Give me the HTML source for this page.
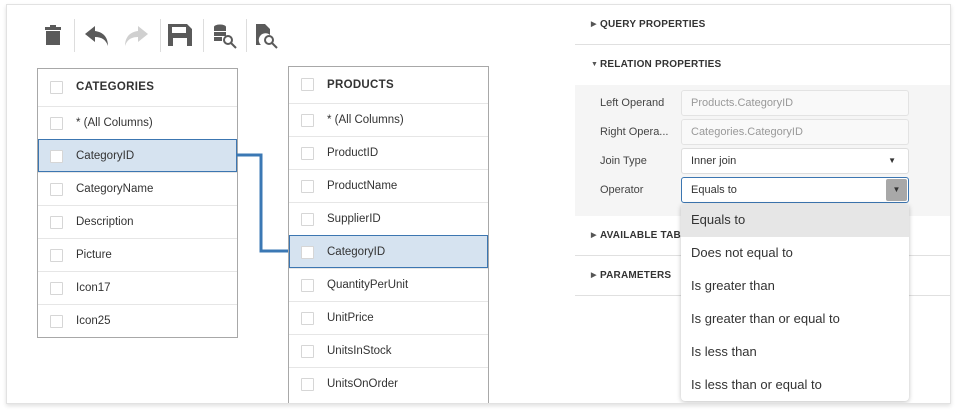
<!DOCTYPE html>
<html><head><style>
*{box-sizing:border-box;margin:0;padding:0}
body{width:971px;height:412px;background:#fff;position:relative;overflow:hidden;font-family:"Liberation Sans",Arial,sans-serif;color:#333}
.frame{position:absolute;left:6px;top:4px;width:945px;height:400px;border:1px solid #e2e2e2;box-shadow:0 2px 4px rgba(0,0,0,.12);overflow:hidden;background:#fff}
.a{position:absolute}
.sep{position:absolute;top:19px;width:1px;height:33px;background:#ddd}
.tbl{position:absolute;width:201px;border:1px solid #a8a8a8;background:#fff;overflow:hidden}
.row{height:33px;border-top:1px solid #e6e6e6;position:relative;font-size:11.5px;line-height:32px;padding-left:38px}
.row:first-child{border-top:none}
.row .cb{position:absolute;left:12px;top:10px;width:13px;height:13px;border:1px solid #d6d6d6;background:#fff;border-radius:1px}
.hdr{font-weight:bold;font-size:11.5px;letter-spacing:.3px}
.sel{background:#d6e3f0;outline:1px solid #3c76b1;outline-offset:-1px}
.sec{position:absolute;left:568px;width:376px;border-bottom:1px solid #e0e0e0;font-size:10px;font-weight:bold;letter-spacing:.2px;padding-left:25px}
.sec i{position:absolute;left:16px;font-style:normal;font-size:7px;color:#555}
.lbl{position:absolute;left:593px;font-size:11px;color:#444}
.inp{position:absolute;left:674px;width:228px;height:26px;border:1px solid #e3e3e3;border-radius:3px;font-size:11px;line-height:24px;padding-left:9px;background:#f9f9f9;color:#999}
.dd{position:absolute;left:674px;top:199px;width:228px;height:197px;background:#fff;border-radius:4px;box-shadow:0 1px 5px rgba(0,0,0,.25)}
.dd div{height:33px;line-height:32px;padding-left:10px;font-size:13px;color:#333}
</style></head><body>
<div class="frame">
<svg class="a" style="left:36px;top:18px" width="250" height="32" viewBox="36 18 250 32">
 <g fill="#5a5a5a">
  <rect x="38" y="22" width="16" height="3"/><rect x="43" y="20" width="6" height="3"/>
  <rect x="39" y="26" width="14" height="14"/>
  <path d="M88 21 L78 29 L88 37 L88 32 C95 32 99 35 101 41 C101 32 96 27 88 26 Z"/>
 </g>
 <path fill="#d0d0d0" d="M131 21 L141 29 L131 37 L131 32 C124 32 120 35 118 41 C118 32 123 27 131 26 Z"/>
 <g fill="#5a5a5a">
  <path d="M161 19 H180 L185 24 V41 H161 Z M165 22 V28 H179 V22 Z M166 33 V41 H180 V33 Z" fill-rule="evenodd"/>
  <ellipse cx="213" cy="22" rx="6" ry="2.5"/><rect x="207" y="22" width="12" height="4"/>
  <rect x="207" y="27" width="12" height="4"/><rect x="207" y="32" width="8" height="4"/>
  <path d="M249 19 H258 L263 24 V30 A6 6 0 0 0 254 40 H249 Z"/>
 </g>
 <g fill="none" stroke="#5a5a5a" stroke-width="2">
  <circle cx="221" cy="35" r="4"/><path d="M224 38 L229 43"/>
  <circle cx="262" cy="35" r="4"/><path d="M265 38 L270 43"/>
 </g>
</svg>
<div class="sep" style="left:67px;top:14px"></div>
<div class="sep" style="left:153px;top:14px"></div>
<div class="sep" style="left:196px;top:14px"></div>
<div class="sep" style="left:239px;top:14px"></div>

<div class="tbl" style="left:30px;top:63px">
 <div class="row hdr" style="height:37px;line-height:37px"><span class="cb" style="top:12px"></span>CATEGORIES</div>
 <div class="row"><span class="cb"></span>* (All Columns)</div>
 <div class="row sel"><span class="cb"></span>CategoryID</div>
 <div class="row"><span class="cb"></span>CategoryName</div>
 <div class="row"><span class="cb"></span>Description</div>
 <div class="row"><span class="cb"></span>Picture</div>
 <div class="row"><span class="cb"></span>Icon17</div>
 <div class="row"><span class="cb"></span>Icon25</div>
</div>
<div class="tbl" style="left:281px;top:61px;height:345px">
 <div class="row hdr" style="height:36px;line-height:36px"><span class="cb" style="top:11px"></span>PRODUCTS</div>
 <div class="row"><span class="cb"></span>* (All Columns)</div>
 <div class="row"><span class="cb"></span>ProductID</div>
 <div class="row"><span class="cb"></span>ProductName</div>
 <div class="row"><span class="cb"></span>SupplierID</div>
 <div class="row sel"><span class="cb"></span>CategoryID</div>
 <div class="row"><span class="cb"></span>QuantityPerUnit</div>
 <div class="row"><span class="cb"></span>UnitPrice</div>
 <div class="row"><span class="cb"></span>UnitsInStock</div>
 <div class="row"><span class="cb"></span>UnitsOnOrder</div>
</div>
<svg class="a" style="left:0;top:0" width="300" height="300"><path d="M229 150 H254 V246 H281" fill="none" stroke="#3b78b4" stroke-width="3"/></svg>

<div class="sec" style="top:0;height:40px;line-height:40px"><i>&#9654;</i>QUERY PROPERTIES</div>
<div class="sec" style="top:40px;height:40px;line-height:40px;border:none"><i>&#9660;</i>RELATION PROPERTIES</div>
<div class="a" style="left:568px;top:80px;width:376px;height:131px;background:#f5f5f5"></div>
<div class="lbl" style="top:92px">Left Operand</div>
<div class="lbl" style="top:121px">Right Opera...</div>
<div class="lbl" style="top:150px">Join Type</div>
<div class="lbl" style="top:179px">Operator</div>
<div class="inp" style="top:85px">Products.CategoryID</div>
<div class="inp" style="top:114px">Categories.CategoryID</div>
<div class="inp" style="top:143px;background:#fff;border-color:#ddd;color:#333">Inner join<span class="a" style="right:12px;top:0;font-size:8px">&#9660;</span></div>
<div class="inp" style="top:172px;background:#fff;border-color:#3c76b1;color:#333">Equals to<span class="a" style="right:1px;top:1px;width:21px;height:22px;background:#a8a8a8;border-radius:2px;text-align:center;font-size:8px;line-height:22px;color:#333">&#9660;</span></div>
<div class="sec" style="top:211px;height:40px;line-height:40px"><i>&#9654;</i>AVAILABLE TABLES</div>
<div class="sec" style="top:251px;height:40px;line-height:40px"><i>&#9654;</i>PARAMETERS</div>
<div class="dd">
 <div style="background:#e6e6e6;border-radius:4px 4px 0 0">Equals to</div>
 <div>Does not equal to</div>
 <div>Is greater than</div>
 <div>Is greater than or equal to</div>
 <div>Is less than</div>
 <div>Is less than or equal to</div>
</div>
</div>
</body></html>
